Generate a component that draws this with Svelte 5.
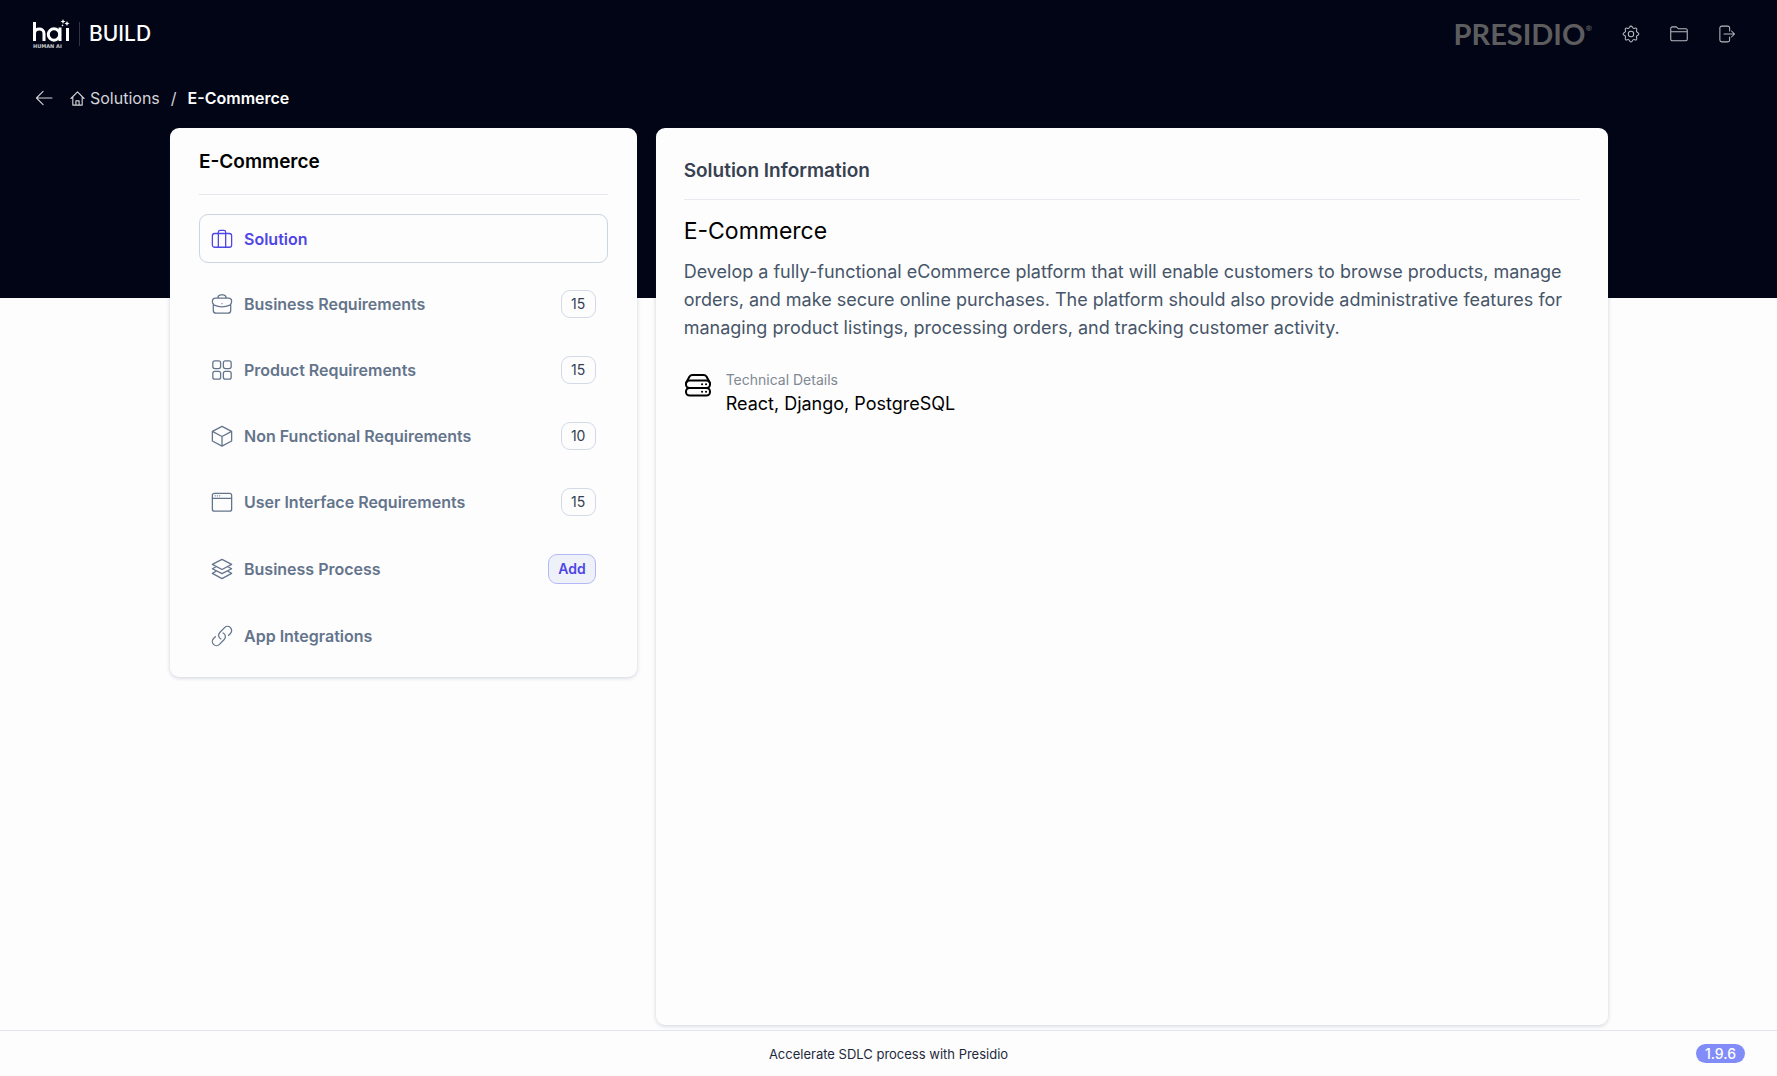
<script>
  const items = [
    { label: 'Solution', icon: 'solution', active: true },
    { label: 'Business Requirements', icon: 'briefcase', count: 15 },
    { label: 'Product Requirements', icon: 'grid', count: 15 },
    { label: 'Non Functional Requirements', icon: 'cube', count: 10 },
    { label: 'User Interface Requirements', icon: 'window', count: 15 },
    { label: 'Business Process', icon: 'layers', add: true },
    { label: 'App Integrations', icon: 'link' }
  ];
</script>

{#snippet icon(name)}
  <svg class="icon" viewBox="0 0 24 24" aria-hidden="true">
    {#if name === 'solution'}
      <rect x="1.5" y="6" width="21" height="15" rx="2.5" />
      <path d="M8 21V4.5A2 2 0 0 1 10 2.5h4a2 2 0 0 1 2 2V21" />
    {:else if name === 'briefcase'}
      <path d="M7.500 5.500a3.500 3.500 0 0 1 3-3.500h3a3.500 3.500 0 0 1 3 3.500M5 5.500h14a3.500 3.500 0 0 1 3.500 3.500c0 2-.5 3.500-2 4.200-5 2.200-12 2.200-17 0-1.500-.7-2-2.200-2-4.200A3.500 3.500 0 0 1 5 5.500zM2.500 13v6a3 3 0 0 0 3 3h13a3 3 0 0 0 3-3v-6M12 11.600v.1" />
    {:else if name === 'grid'}
      <rect x="2" y="2" width="8.500" height="8.500" rx="2.200" />
      <rect x="13.500" y="2" width="8.500" height="8.500" rx="2.200" />
      <rect x="2" y="13.500" width="8.500" height="8.500" rx="2.200" />
      <rect x="13.500" y="13.500" width="8.500" height="8.500" rx="2.200" />
    {:else if name === 'cube'}
      <path d="M12 1.500 22.500 7v10.500L12 23 1.500 17.500V7zM1.500 7 12 12.500 22.500 7M12 12.500V23" />
    {:else if name === 'window'}
      <rect x="1.500" y="2.500" width="21" height="19.500" rx="2.200" />
      <path d="M1.500 8h21M4.500 5.300h.1M7 5.300h.1M9.500 5.300h.1" />
    {:else if name === 'layers'}
      <path d="M12 1.500 22.500 7 12 12.500 1.500 7zM5.500 9.500l-4 2.200L12 17l10.500-5.300-4-2.200M5.500 14.500l-4 2.300L12 22.500l10.500-5.700-4-2.300" />
    {:else}
      <path d="M13.200 8.700a4.500 4.500 0 0 1 1.200 7.200l-5.200 5.200a4.500 4.500 0 0 1-6.400-6.400l2-1.900m14.400-1.600 2-1.900a4.500 4.500 0 0 0-6.400-6.400L9.600 8.100a4.500 4.500 0 0 0 1.200 7.200" />
    {/if}
  </svg>
{/snippet}

<div class="page">
  <header>
    <nav class="topbar" aria-label="Main">
      <a class="brand" href="#home" aria-label="hai build">
        <svg class="hai" viewBox="0 0 37 30" aria-hidden="true">
          <path d="M1.500 3v19M1.500 14.500c0-6 9.500-6 9.500 0V22M27 8.500V22M34.500 9v13" />
          <circle cx="21" cy="15.500" r="5.700" />
          <path class="star" d="m30 0 .7 1.800 1.800.7-1.800.7L30 5l-.7-1.800-1.800-.7 1.800-.7zM34 2l.8 1.700 1.700.8-1.700.8L34 7l-.8-1.700-1.700-.8 1.700-.8zM29.500 5l.4.900.9.400-.9.400-.4.900-.4-.9-.9-.4.900-.4z" />
          <text x="0" y="29">HUMAN AI</text>
        </svg>
        <span class="bar"></span>
        <span class="build">BUILD</span>
      </a>
      <div class="tools">
        <span class="presidio">PRESIDIO<sup>®</sup></span>
        <button aria-label="Settings">
          <svg viewBox="0 0 24 24"><circle cx="12" cy="12" r="3.600" /><path d="M12 1.500c2 0 1.800 2.500 3.200 3s2.700-1.400 4.100 0-.5 2.800 0 4.200 3.200 1.200 3.200 3.300-2.700 1.900-3.200 3.300 1.400 2.800 0 4.200-2.700-.5-4.100 0-1.200 3-3.200 3-1.800-2.500-3.200-3-2.700 1.400-4.100 0 .5-2.800 0-4.200-3.200-1.200-3.200-3.300 2.700-1.900 3.200-3.300-1.400-2.800 0-4.200 2.700.5 4.100 0 1.200-3 3.200-3z" /></svg>
        </button>
        <button aria-label="Projects">
          <svg viewBox="0 0 24 24"><path d="M1 9V4.500a2 2 0 0 1 2-2h5.500L11 5h10a2 2 0 0 1 2 2v12a2 2 0 0 1-2 2H3a2 2 0 0 1-2-2V9h22" /></svg>
        </button>
        <button aria-label="Log out">
          <svg viewBox="0 0 24 24"><path d="M15.500 8V4a2.500 2.500 0 0 0-2.500-2.500H5A2.500 2.500 0 0 0 2.500 4v16A2.500 2.500 0 0 0 5 22.500h8a2.500 2.500 0 0 0 2.500-2.500v-4M8 12h14m-4-4 4 4-4 4" /></svg>
        </button>
      </div>
    </nav>
    <nav class="crumbs" aria-label="Breadcrumb">
      <button class="back" aria-label="Back">
        <svg viewBox="0 0 20 18"><path d="M19 9H1.500M9 1.500 1.500 9 9 16.500" /></svg>
      </button>
      <a href="#solutions">
        <svg viewBox="0 0 16 16"><path d="m1 8 7-7 7 7M3 6.500V15h10V6.500M6.300 15v-4.500h3.400V15" /></svg>
        Solutions
      </a>
      <span class="slash">/</span>
      <strong>E-Commerce</strong>
    </nav>
  </header>

  <main>
    <aside class="card side">
      <h2>E-Commerce</h2>
      <ul>
        {#each items as item}
          <li class:active={item.active}>
            <a href="#{item.icon}">{@render icon(item.icon)}{item.label}</a>
            {#if item.count}<span class="count">{item.count}</span>{/if}
            {#if item.add}<button class="add">Add</button>{/if}
          </li>
        {/each}
      </ul>
    </aside>
    <section class="card info">
      <h2>Solution Information</h2>
      <h1>E-Commerce</h1>
      <p>Develop a fully-functional eCommerce platform that will enable customers to browse products, manage orders, and make secure online purchases. The platform should also provide administrative features for managing product listings, processing orders, and tracking customer activity.</p>
      <div class="tech">
        <svg viewBox="0 0 28 24" aria-hidden="true"><path d="M2 10 5.500 3.500A3.500 3.500 0 0 1 8.500 2h11a3.500 3.500 0 0 1 3 1.500L26 10" /><rect x="2" y="7.500" width="24" height="7.500" rx="3.500" /><rect x="2" y="15" width="24" height="7.500" rx="3.500" /><path d="M18 11.300h.1M22 11.300h.1M18 18.800h.1M22 18.800h.1" /></svg>
        <dl>
          <dt>Technical Details</dt>
          <dd>React, Django, PostgreSQL</dd>
        </dl>
      </div>
    </section>
  </main>

  <footer>
    <span class="tagline">Accelerate SDLC process with Presidio</span>
    <span class="version">1.9.6</span>
  </footer>
</div>

<style>
  :global(body) { background: #fdfdfd; }
  .page {
    box-sizing: border-box;
    min-height: 100vh;
    display: flex;
    flex-direction: column;
    font-family: Inter, "Liberation Sans", sans-serif;
    color: #000;
    background: linear-gradient(#020515 298px, #fdfdfd 298px);
  }
  h1, h2, p, ul, dl, dd { margin: 0; padding: 0; }
  a { color: inherit; text-decoration: none; }
  button { font: inherit; color: inherit; background: none; border: 0; padding: 0; cursor: pointer; }
  svg { display: block; fill: none; stroke: currentColor; stroke-linecap: round; stroke-linejoin: round; flex: none; }
  .topbar { display: flex; align-items: center; justify-content: space-between; height: 68px; padding: 0 41px 0 33px; }
  .brand { display: flex; align-items: center; color: #fff; }
  .hai { width: 37px; height: 30px; stroke-width: 3; stroke-linecap: butt; }
  .hai .star { fill: #fff; stroke: none; }
  .hai text { fill: #c9cbd0; stroke: none; font: 700 5px "DejaVu Sans", sans-serif; }
  .bar { width: 1px; height: 24px; margin: 0 9px; background: #30323f; }
  .build { font-size: 21px; line-height: 30px; font-weight: 500; }
  .tools { display: flex; align-items: center; gap: 30px; color: #b9bbc2; }
  .tools svg { width: 18px; height: 18px; stroke-width: 1.400; }
  .presidio { font: 700 29px/30px Lato, sans-serif; color: #5d5d60; }
  .presidio sup { font-size: 8px; vertical-align: top; line-height: 18px; }
  .crumbs { display: flex; align-items: center; height: 60px; padding: 0 35px; font-size: 16px; color: #d3d4d9; }
  .crumbs a { display: flex; align-items: center; gap: 5px; }
  .crumbs a svg { width: 15px; height: 15px; stroke-width: 1.200; }
  .back svg { width: 18px; height: 16px; stroke-width: 1.200; }
  .back { margin-right: 17px; }
  .slash { margin: 0 11px; }
  .crumbs strong { color: #fff; font-weight: 600; }
  main { flex: 1; display: grid; grid-template-columns: 49fr 100fr; gap: 19px; align-items: start; padding: 0 169px 5px 170px; }
  .card { box-sizing: border-box; background: #fdfdfd; border-radius: 9px; box-shadow: 0 1px 4px rgba(30, 41, 90, .2); }
  .side { padding: 20px 29px 17px; }
  .side h2 { font-size: 19px; line-height: 27px; font-weight: 600; padding-bottom: 19px; border-bottom: 1px solid #e4e7f0; }
  ul { list-style: none; display: flex; flex-direction: column; gap: 16px; padding-top: 19px; }
  li { box-sizing: border-box; display: flex; align-items: center; justify-content: space-between; min-height: 49px; padding: 10px 11px; border: 1px solid transparent; border-radius: 9px; color: #64748b; font-size: 16px; font-weight: 600; }
  li a { display: flex; align-items: center; gap: 11px; }
  .icon { width: 22px; height: 22px; stroke-width: 1.400; }
  li.active { border-color: #cbd5e1; color: #4f46e5; }
  .count { box-sizing: border-box; width: 35px; border: 1px solid #d3dae6; border-radius: 9px; color: #334155; font-size: 14px; font-weight: 400; line-height: 26px; text-align: center; }
  .add { padding: 0 9px; border: 1px solid #b4b8fa; border-radius: 9px; background: #eef2f8; color: #4f46e5; font-size: 14px; font-weight: 600; line-height: 28px; }
  .info { align-self: stretch; padding: 29px 28px; }
  .info h2 { color: #374151; font-size: 19px; line-height: 28px; font-weight: 600; padding-bottom: 14px; border-bottom: 1px solid #e8eaf0; }
  .info h1 { margin-top: 16px; font-size: 23px; line-height: 30px; font-weight: 400; }
  .info p { margin-top: 12px; color: #475569; font-size: 18px; line-height: 28px; }
  .tech { display: flex; gap: 14px; margin-top: 27px; }
  .tech svg { width: 28px; height: 24px; margin-top: 4px; stroke-width: 2; }
  dt { color: #808894; font-size: 14px; line-height: 21px; }
  dd { font-size: 18px; line-height: 27px; }
  footer { display: grid; grid-template-columns: 1fr auto 1fr; align-items: center; height: 45px; padding: 0 32px; border-top: 1px solid #e2e5f0; background: #fdfdfd; color: #1e293b; font-size: 14px; }
  .tagline { grid-column: 2; font-size: 13px; }
  .version { justify-self: end; padding: 0 9px; border-radius: 10px; background: #818cf8; color: #fff; font-weight: 500; line-height: 19px; }
</style>
